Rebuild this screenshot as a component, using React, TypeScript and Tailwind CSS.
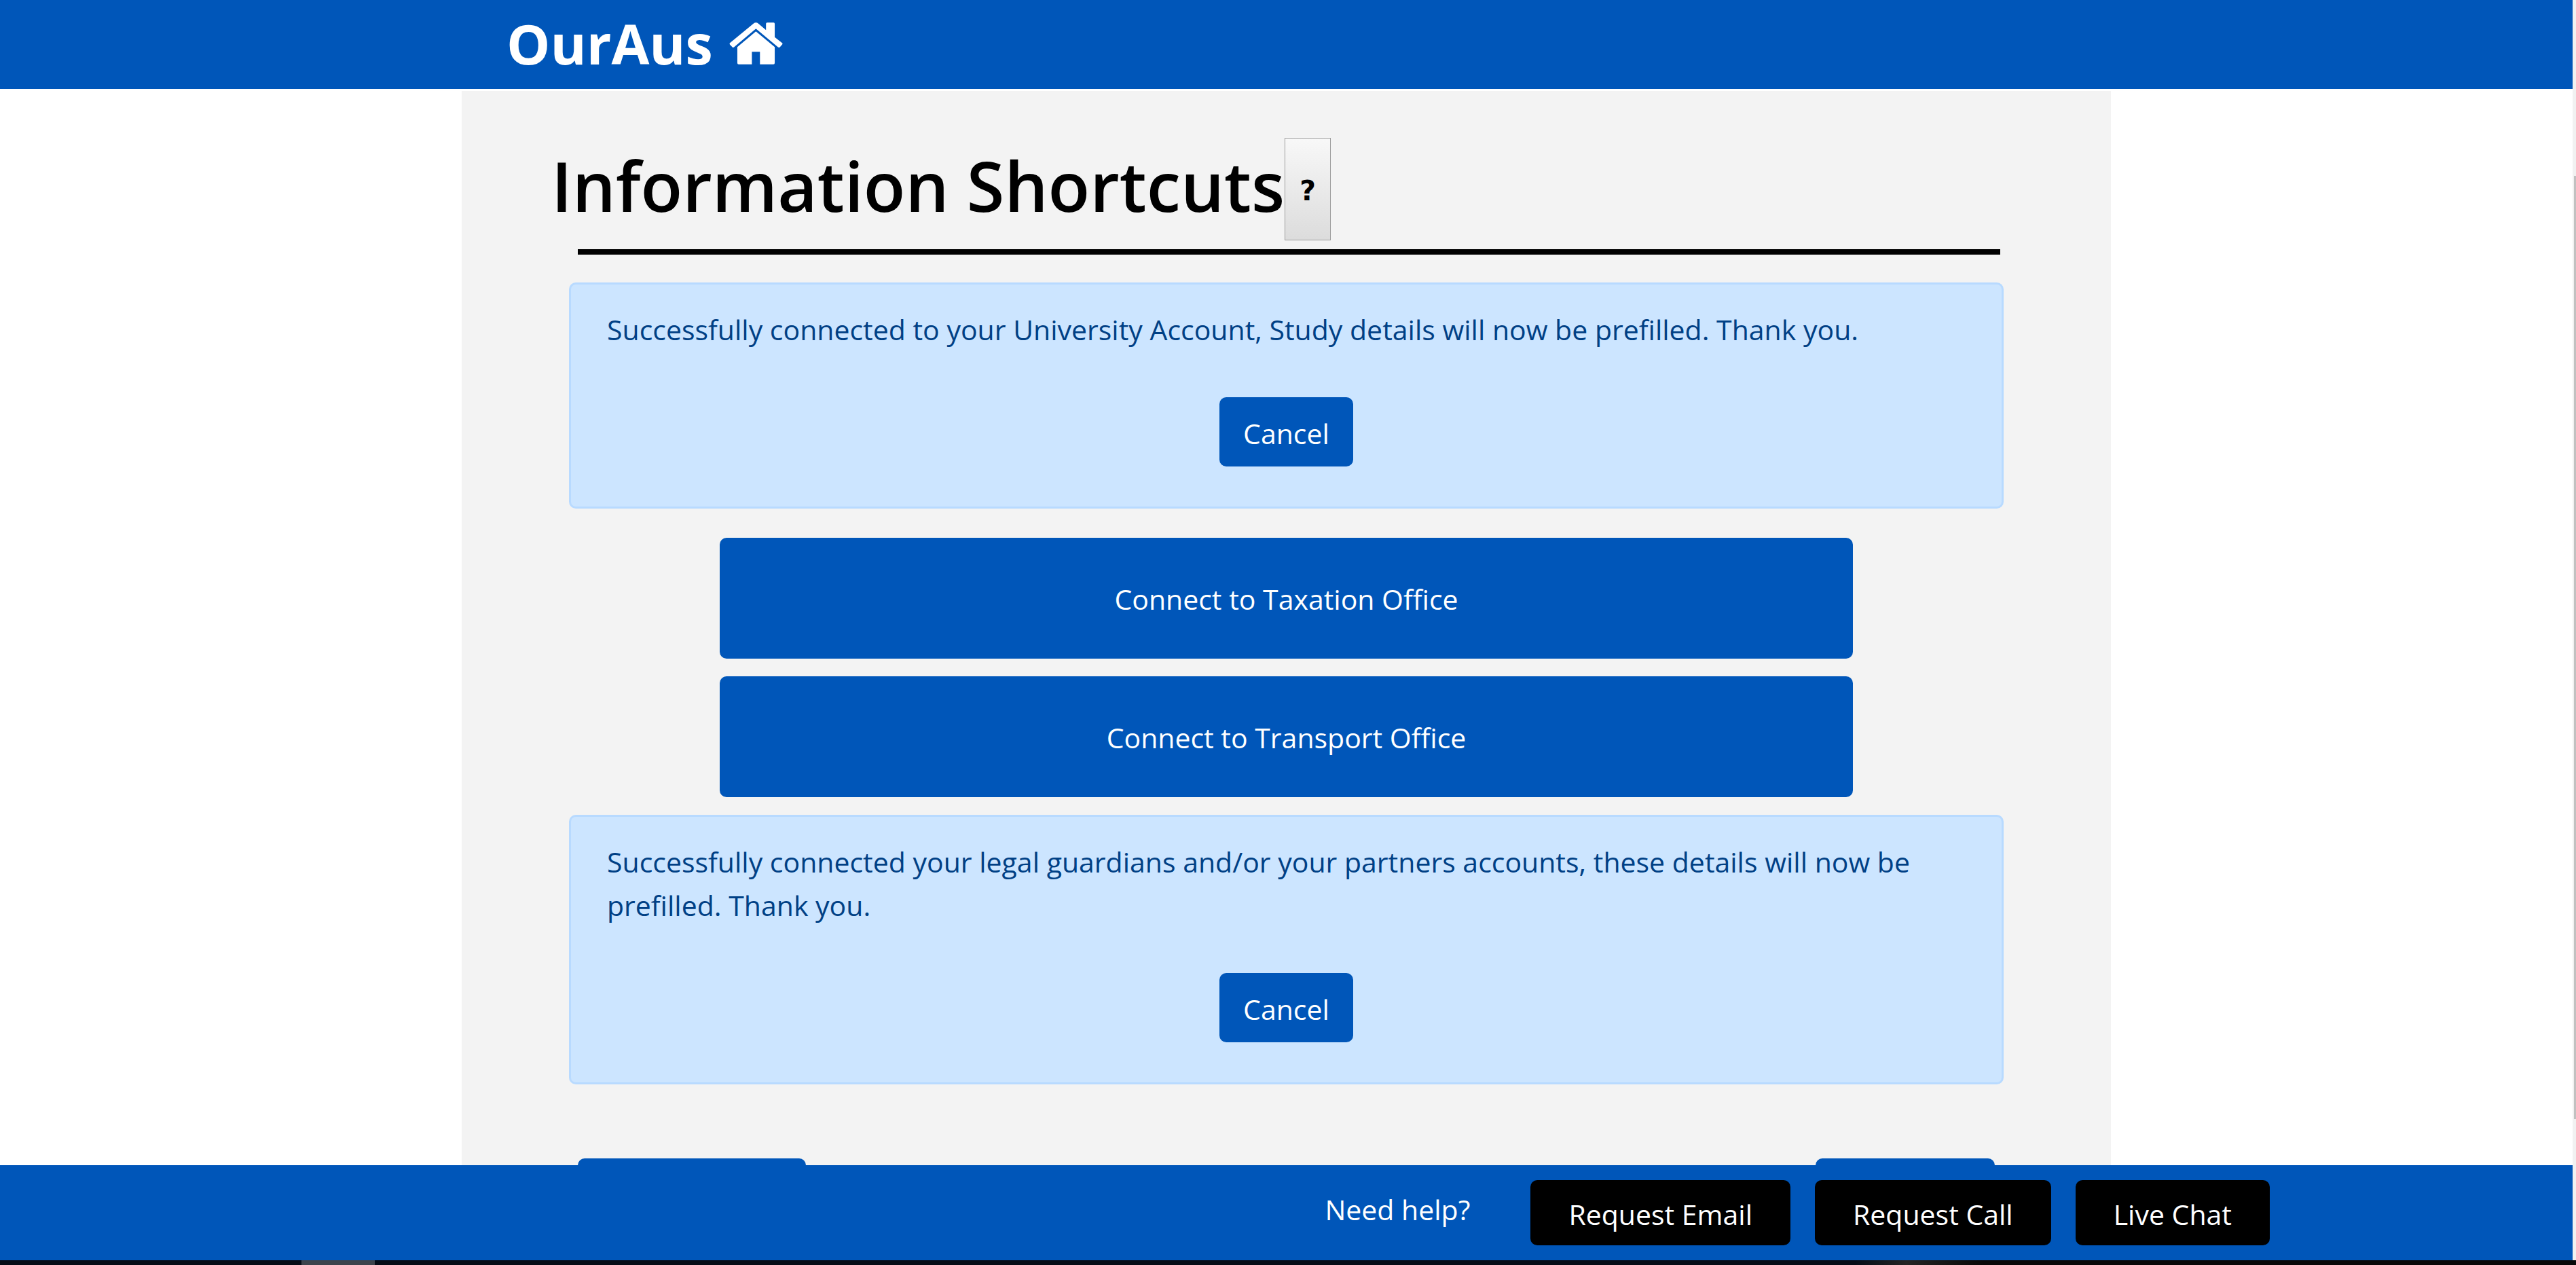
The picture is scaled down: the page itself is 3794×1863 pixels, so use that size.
import type { ReactNode } from "react";

function HomeIcon() {
  return (
    <svg viewBox="42 35 237 188" className="h-[62px] w-[79px]" fill="currentColor" aria-hidden="true">
      <path d="M149 40 Q160 32 171 40 L205 69 V41 Q205 36 210 36 H239 Q244 36 244 41 V101 L277 127 Q280 130 278 133 L267 146 Q263 149 259 146 L160 63 L62 146 Q58 149 55 146 L44 134 Q41 130 44 127 Z" />
      <path d="M160 75 L244 145 V216 Q244 222 238 222 H178 V166 H142 V222 H83 Q77 222 77 216 V145 Z" />
    </svg>
  );
}

function CancelButton() {
  return (
    <button type="button" className="mx-auto mt-[68px] block rounded-[10px] bg-[#0056b9] px-[35px] pt-[21px] pb-[17px] text-white">
      Cancel
    </button>
  );
}

function Alert({ children }: { children: ReactNode }) {
  return (
    <section className="rounded-[10px] border-[3px] border-[#b8daff] bg-[#cce5ff] px-[53px] pt-[34px] pb-[59px] text-[#004085]">
      <p>{children}</p>
      <CancelButton />
    </section>
  );
}

function ConnectButton({ children }: { children: ReactNode }) {
  return (
    <button type="button" className="w-[79%] rounded-[10px] bg-[#0056b9] pt-[58px] pb-[56px] text-white">
      {children}
    </button>
  );
}

function HelpButton({ children }: { children: ReactNode }) {
  return (
    <button type="button" className="rounded-[10px] bg-black px-14 pt-[18px] pb-[14px] text-white">
      {children}
    </button>
  );
}

export default function App() {
  return (
    <div className="flex h-screen flex-col bg-white font-['Open_Sans',sans-serif] text-[41px] leading-[64px]">
      <div className="flex min-h-0 flex-1">
        <div className="flex min-w-0 flex-1 flex-col">
          <header className="shrink-0 bg-[#0056b9] text-white">
            <div className="mx-auto flex h-[131px] w-full max-w-[2429px] items-center px-[66px] pb-1">
              <a href="#" className="flex items-center gap-6 text-[81px] font-bold">
                OurAus
                <HomeIcon />
              </a>
            </div>
          </header>

          <main className="mx-auto mt-[3px] min-h-0 w-full max-w-[2429px] flex-1 overflow-hidden bg-[#f3f3f3] px-[132px] pt-[69px]">
            <div className="flex">
              <h1 className="text-[101px] leading-[141px] font-semibold text-black">Information Shortcuts</h1>
              <button
                type="button"
                className="h-[151px] w-[68px] border border-[#9b9b9b] bg-linear-to-b from-[#f8f8f8] to-[#dcdcdc] pt-1 font-['DejaVu_Sans',sans-serif] font-bold text-black"
              >
                ?
              </button>
            </div>
            <hr className="mt-[13px] mr-[31px] ml-[39px] border-t-8 border-black" />

            <div className="px-[26px] pt-[41px]">
              <Alert>
                Successfully connected to your University Account, Study details will now be prefilled. Thank you.
              </Alert>
              <div className="mt-[43px] mb-[26px] flex flex-col items-center gap-[26px]">
                <ConnectButton>Connect to Taxation Office</ConnectButton>
                <ConnectButton>Connect to Transport Office</ConnectButton>
              </div>
              <Alert>
                Successfully connected your legal guardians and/or your partners accounts, these details will now be
                prefilled. Thank you.
              </Alert>
              <div className="mt-[109px] flex justify-between px-[13px]">
                <button type="button" aria-label="Back" className="h-[102px] w-[336px] rounded-[10px] bg-[#0056b9]" />
                <button type="button" aria-label="Next" className="h-[102px] w-[264px] rounded-[10px] bg-[#0056b9]" />
              </div>
            </div>
          </main>

          <footer className="flex h-[140px] shrink-0 items-start justify-end gap-9 bg-[#0056b9] pt-[22px] pr-[446px] text-white">
            <span className="mt-[11px] mr-[53px]">Need help?</span>
            <HelpButton>Request Email</HelpButton>
            <HelpButton>Request Call</HelpButton>
            <HelpButton>Live Chat</HelpButton>
          </footer>
        </div>

        <div className="w-[5px] shrink-0 bg-[#f1f1f1] pt-[259px] pl-0.5">
          <div className="h-[1389px] bg-[#c1c1c1]" />
        </div>
      </div>

      <div className="flex h-[7px] shrink-0 bg-linear-to-r from-[#050c17] from-72% via-[#242424] via-74% to-[#080808] to-77% pl-[444px]">
        <div className="w-[108px] bg-[#3c434c]" />
      </div>
    </div>
  );
}
